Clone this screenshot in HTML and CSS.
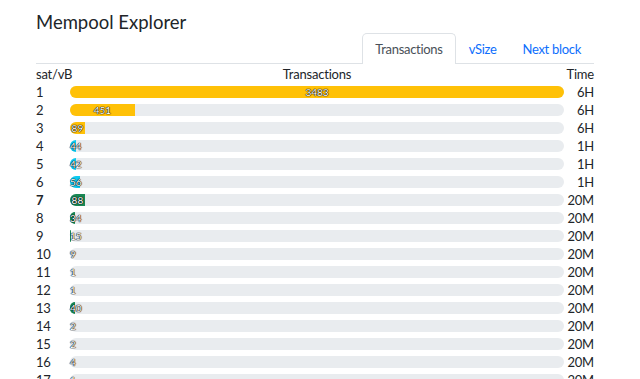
FILE: index.html
```html
<!DOCTYPE html>
<html>

<head>
  <link rel="stylesheet" href="styles.css">
</head>

<body>
  <div class="page">
    <h1 class="title">Mempool Explorer</h1>

    <ul class="nav-tabs">
      <li class="nav-item active">Transactions</li>
      <li class="nav-item">vSize</li>
      <li class="nav-item">Next block</li>
    </ul>

    <div class="fee-table">
      <div class="fee-row head">
        <div class="fee">sat/vB</div>
        <div class="label">Transactions</div>
        <div class="time">Time</div>
      </div>

      <div class="fee-row"><div class="fee">1</div><div class="progress"><div class="progress-bar warning full" style="width: 100%"><span>3483</span></div></div><div class="time">6H</div></div>
      <div class="fee-row"><div class="fee">2</div><div class="progress"><div class="progress-bar warning" style="width: 13.1%"><span>451</span></div></div><div class="time">6H</div></div>
      <div class="fee-row"><div class="fee">3</div><div class="progress"><div class="progress-bar warning" style="width: 3%"><span>89</span></div></div><div class="time">6H</div></div>
      <div class="fee-row"><div class="fee">4</div><div class="progress"><div class="progress-bar info" style="width: 1.3%"><span>44</span></div></div><div class="time">1H</div></div>
      <div class="fee-row"><div class="fee">5</div><div class="progress"><div class="progress-bar info" style="width: 1.2%"><span>42</span></div></div><div class="time">1H</div></div>
      <div class="fee-row"><div class="fee">6</div><div class="progress"><div class="progress-bar info" style="width: 2%"><span>56</span></div></div><div class="time">1H</div></div>
      <div class="fee-row strong"><div class="fee">7</div><div class="progress"><div class="progress-bar success" style="width: 3%"><span>88</span></div></div><div class="time">20M</div></div>
      <div class="fee-row"><div class="fee">8</div><div class="progress"><div class="progress-bar success" style="width: 1%"><span>34</span></div></div><div class="time">20M</div></div>
      <div class="fee-row"><div class="fee">9</div><div class="progress"><div class="progress-bar success" style="width: 0.2%"><span>15</span></div></div><div class="time">20M</div></div>
      <div class="fee-row"><div class="fee">10</div><div class="progress"><div class="progress-bar success" style="width: 0%"><span>9</span></div></div><div class="time">20M</div></div>
      <div class="fee-row"><div class="fee">11</div><div class="progress"><div class="progress-bar success" style="width: 0%"><span>1</span></div></div><div class="time">20M</div></div>
      <div class="fee-row"><div class="fee">12</div><div class="progress"><div class="progress-bar success" style="width: 0%"><span>1</span></div></div><div class="time">20M</div></div>
      <div class="fee-row"><div class="fee">13</div><div class="progress"><div class="progress-bar success" style="width: 1.1%"><span>40</span></div></div><div class="time">20M</div></div>
      <div class="fee-row"><div class="fee">14</div><div class="progress"><div class="progress-bar success" style="width: 0%"><span>2</span></div></div><div class="time">20M</div></div>
      <div class="fee-row"><div class="fee">15</div><div class="progress"><div class="progress-bar success" style="width: 0%"><span>2</span></div></div><div class="time">20M</div></div>
      <div class="fee-row"><div class="fee">16</div><div class="progress"><div class="progress-bar success" style="width: 0%"><span>4</span></div></div><div class="time">20M</div></div>
      <div class="fee-row"><div class="fee">17</div><div class="progress"><div class="progress-bar success" style="width: 0%"><span>1</span></div></div><div class="time">20M</div></div>
    </div>
  </div>
</body>

</html>
```

FILE: styles.css
```css
html, body {
  margin: 0;
  padding: 0;
  overflow: hidden;
  background: #fff;
}

body {
  font-family: "Lato", "Noto Sans", sans-serif;
  color: #212529;
}

.page {
  width: 558px;
  margin-left: 36px;
}

.title {
  margin: 0;
  padding-top: 10px;
  font-size: 18.5px;
  font-weight: normal;
  line-height: 24px;
}

.nav-tabs {
  display: flex;
  justify-content: flex-end;
  list-style: none;
  margin: -1px 0 0 0;
  padding: 0;
  border-bottom: 1px solid #dee2e6;
}

.nav-item {
  padding: 0 12px;
  height: 30px;
  line-height: 30px;
  font-size: 13px;
  letter-spacing: -0.3px;
  color: #0d6efd;
  border: 1px solid transparent;
  border-bottom: 0;
  border-top-left-radius: 5px;
  border-top-right-radius: 5px;
  margin-bottom: -1px;
}

.nav-item.active {
  color: #495057;
  background: #fff;
  border-color: #dee2e6;
}

.fee-table {
  font-size: 13px;
  letter-spacing: -0.2px;
}

.fee-row {
  display: grid;
  grid-template-columns: 34px 1fr 30px;
  align-items: center;
  height: 18px;
}

.fee-row.head {
  height: 19px;
}

.fee-row.head .label {
  text-align: center;
}

.fee-row.strong .fee {
  font-weight: bold;
}

.time {
  text-align: right;
}

.progress {
  display: flex;
  height: 12px;
  background: #e9ecef;
  border-radius: 6px;
}

.progress-bar {
  display: flex;
  height: 12px;
  line-height: 12px;
  font-size: 10px;
  letter-spacing: 0;
  color: #fff;
  white-space: nowrap;
  text-shadow: 0 0 1px #000, 0 0 1px #000, 0 0 1px #000;
  border-radius: 6px 0 0 6px;
}

.progress-bar span {
  margin: 0 auto;
}

.progress-bar.full {
  border-radius: 6px;
}

.warning {
  background: #ffc107;
}

.info {
  background: #0dcaf0;
}

.success {
  background: #198754;
}
```
